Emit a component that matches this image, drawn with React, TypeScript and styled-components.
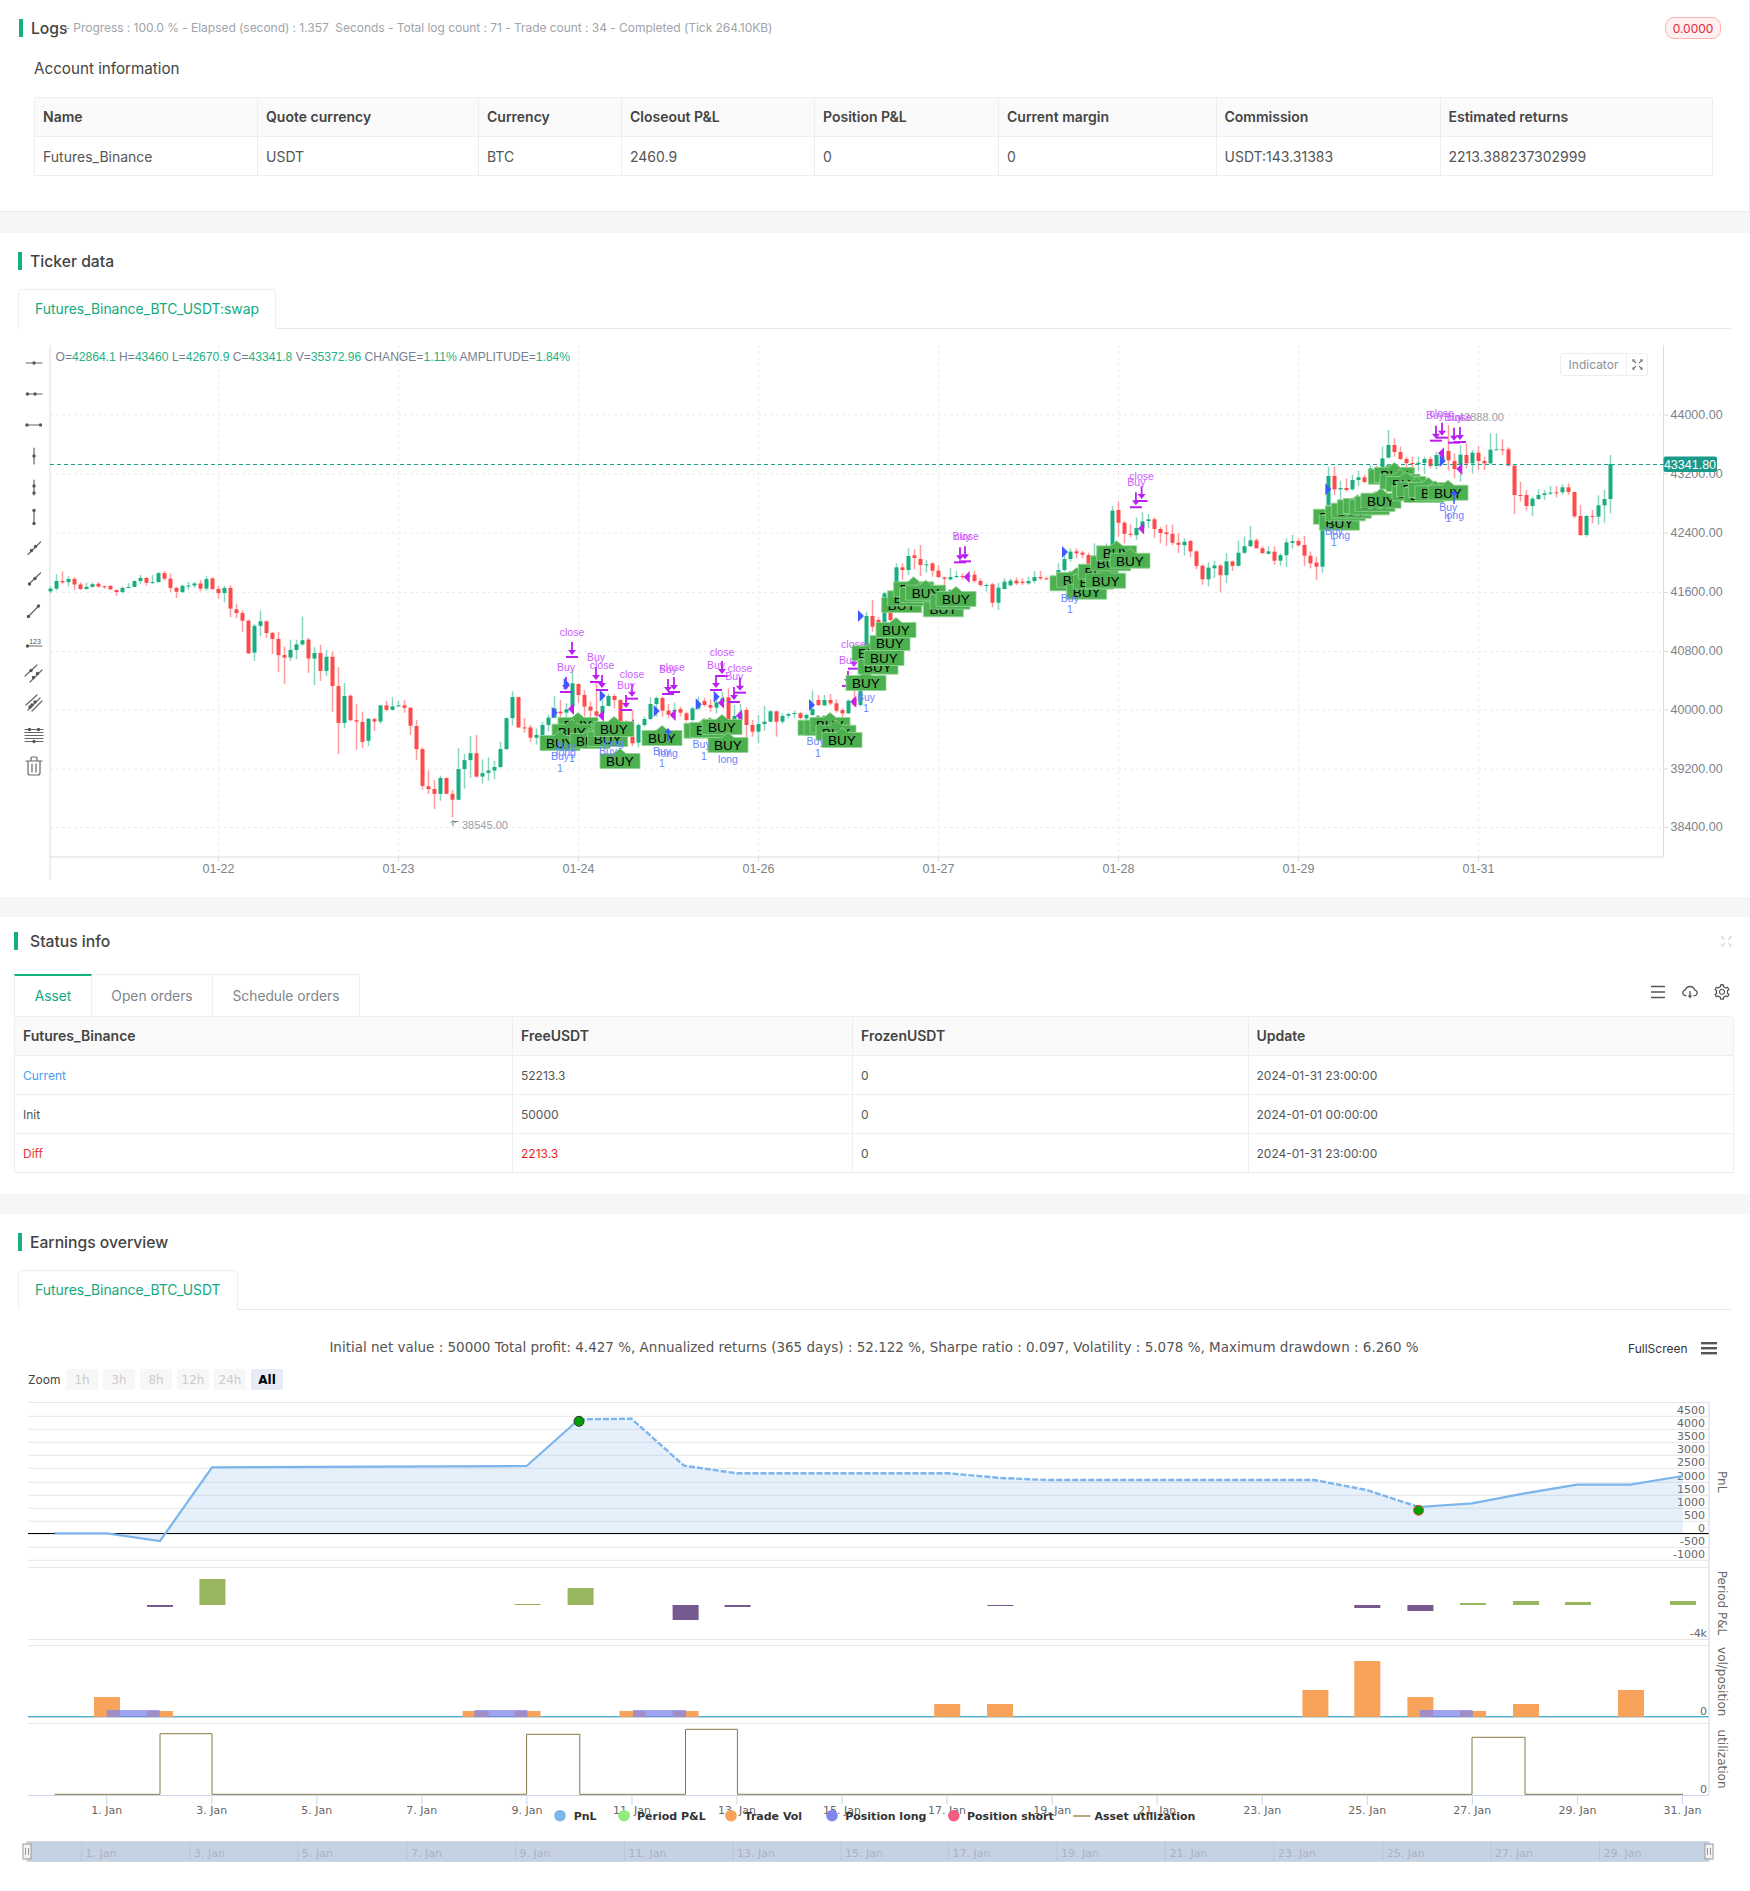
import React from 'react';
import styled, { createGlobalStyle } from 'styled-components';
import { AiOutlineCloudDownload, AiOutlineFullscreen, AiOutlineMenu, AiOutlineSetting } from 'react-icons/ai';

const Global = createGlobalStyle`
  html, body { margin: 0; padding: 0; background: #fff; overflow: hidden; }
  body { font-family: Inter, "Liberation Sans", sans-serif; color: #333; }
`;

const Page = styled.div`width: 1750px; height: 1891px; background: #fff;`;
const Section = styled.section<{ $h: number; $pt: number; $edge?: boolean }>`
  height: ${p => p.$h}px; padding-top: ${p => p.$pt}px; box-sizing: border-box; background: #fff;
  ${p => p.$edge ? 'border-bottom: 1px solid #eee; border-right: 1px solid #eee;' : ''}
`;
const Band = styled.div<{ $h: number }>`height: ${p => p.$h}px; background: #f5f6f8;`;
const Head = styled.div<{ $ml: number; $mr?: number }>`
  display: flex; align-items: center; height: 18px; margin: 0 ${p => p.$mr ?? 0}px 0 ${p => p.$ml}px;
`;
const HeadBar = styled.i`display: block; width: 4px; height: 18px; background: #14b07e; flex: none;`;
const HeadTitle = styled.h2<{ $gap: number }>`
  margin: 0 0 0 ${p => p.$gap}px; padding-top: 1px; font-size: 15.7px; font-weight: 500; color: #444; line-height: 18px;
`;
const Progress = styled.span`
  margin-left: -3px; font-size: 12px; letter-spacing: -0.04px; color: #a0a4aa; white-space: nowrap; position: relative; top: -1px;
`;
const Badge = styled.span`
  margin-left: auto; margin-right: 28px; width: 56px; height: 22px; box-sizing: border-box; border: 1px solid #ffb3b3;
  background: #fff1f0; border-radius: 9px; font-size: 12px; color: #e5283a; display: flex; align-items: center; justify-content: center;
`;
const SubTitle = styled.h3`margin: 20px 0 16px 34px; font-size: 15.2px; line-height: 24px; font-weight: 400; color: #444;`;
const Grid = styled.div<{ $ml: number; $mr: number }>`
  margin: 0 ${p => p.$mr}px 0 ${p => p.$ml}px; border: 1px solid #eee; border-bottom: 0; border-radius: 3px 3px 0 0;
`;
const Row = styled.div<{ $cols: string; $head?: boolean; $h: number }>`
  display: grid; grid-template-columns: ${p => p.$cols}; height: ${p => p.$h}px; box-sizing: border-box;
  border-bottom: 1px solid #eee; background: ${p => p.$head ? '#fafafa' : '#fff'};
`;
const Cell = styled.div<{ $head?: boolean; $size: number; $color?: string; $pad: number }>`
  display: flex; align-items: center; padding-left: ${p => p.$pad}px; border-left: 1px solid #eee;
  padding-bottom: ${p => p.$head ? 2 : 0}px;
  font-size: ${p => p.$size}px; font-weight: ${p => p.$head ? 600 : 400};
  color: ${p => p.$color ?? (p.$head ? '#444' : '#555')}; white-space: nowrap;
  &:first-child { border-left: 0; }
`;
const TabLine = styled.div<{ $ml: number; $mr: number }>`
  display: flex; margin: 19px ${p => p.$mr}px 0 ${p => p.$ml}px; height: 40px; box-sizing: border-box; border-bottom: 1px solid #e8e8e8;
`;
const CardTab = styled.div`
  padding: 0 16px; height: 40px; box-sizing: border-box; border: 1px solid #eee; border-bottom: 1px solid #fff; border-radius: 4px 4px 0 0;
  display: flex; align-items: center; font-size: 13.9px; color: #12a97e; white-space: nowrap; margin-left: -1px;
`;
const ChartBox = styled.div<{ $h: number; $mt: number }>`position: relative; height: ${p => p.$h}px; margin-top: ${p => p.$mt}px;`;
const ChartSvg = styled.svg`display: block; position: absolute; left: 0; top: 0;`;
const IndicatorBtn = styled.div`
  position: absolute; left: 1560px; top: 8px; width: 88px; height: 23px; box-sizing: border-box; border: 1px solid #eee; border-radius: 3px;
  background: #fff; display: flex; align-items: center; font-size: 12px; color: #8a8f96;
`;
const IndicatorText = styled.span`width: 65px; text-align: center; border-right: 1px solid #eee; line-height: 21px;`;
const IndicatorIcon = styled.span`flex: 1; display: flex; justify-content: center; color: #666;`;
const FadedIcon = styled.span`margin-left: auto; display: flex; color: #d6d6d6;`;
const StatusBody = styled.div`margin: 0 16px 0 14px;`;
const StatusTabs = styled.div`display: flex; height: 42px; margin-top: 24px;`;
const PlainTab = styled.div<{ $active?: boolean; $w: number }>`
  width: ${p => p.$w}px; box-sizing: border-box; display: flex; align-items: center; justify-content: center; font-size: 13.8px;
  color: ${p => p.$active ? '#12a97e' : '#7f858c'}; border: 1px solid #eee; border-left: ${p => p.$active ? '1px solid #eee' : '0'}; border-bottom: 0;
  border-top: ${p => p.$active ? '2px solid #14b07e' : '1px solid #eee'}; background: #fff;
`;
const ToolIcons = styled.div`margin-left: auto; display: flex; gap: 14px; padding: 9px 3px 0 0; color: #555; height: 20px; font-size: 18px;`;

const Up = '#19ad80', Down = '#ff4a4a';
const CandleBody = styled.rect<{ $up: boolean }>`fill: ${p => p.$up ? Up : Down};`;
const CandleWick = styled.rect<{ $up: boolean }>`fill: ${p => p.$up ? '#8bd5be' : '#ff9d9d'};`;
const GridLine = styled.line`stroke: #ececec; stroke-width: 1; stroke-dasharray: 3 3;`;
const AxisLine = styled.line`stroke: #dcdcdc; stroke-width: 1;`;
const AxisText = styled.text`font: 12.5px "Liberation Sans", sans-serif; fill: #7d838c;`;
const OhlcText = styled.text`font: 12.1px "Liberation Sans", sans-serif; fill: #76808f;`;
const MarkText = styled.text<{ $blue?: boolean }>`
  font: 10.5px "Liberation Sans", sans-serif; fill: ${p => p.$blue ? '#6a84ff' : '#cc5cff'}; text-anchor: middle;
`;
const BuyText = styled.text`font: 13.5px "Liberation Sans", sans-serif; fill: #000; text-anchor: middle;`;
const HighText = styled.text`font: 11px "Liberation Sans", sans-serif; fill: #9aa0a8;`;
const ToolStroke = styled.g`stroke: #666; stroke-width: 1.2; fill: none; stroke-linecap: round;`;
const HcText = styled.text<{ $size?: number; $color?: string; $weight?: number; $anchor?: string }>`
  font-family: "DejaVu Sans", sans-serif; font-size: ${p => p.$size ?? 11}px; fill: ${p => p.$color ?? '#666'};
  font-weight: ${p => p.$weight ?? 400}; text-anchor: ${p => p.$anchor ?? 'start'};
`;
const HcGrid = styled.line`stroke: #e6e6e6; stroke-width: 1;`;
const HcAxis = styled.line`stroke: #ccd6eb; stroke-width: 1;`;

type C = { x: number; up: boolean; t: number; b: number; h: number; l: number };
const parse = (base: number, scale: number, start: number, rows: string): C[] =>
  rows.trim().split('\n').map((r, k) => {
    const [d, t, b, h, l] = r.trim().split(' ');
    const f = (v: string) => base + Number(v) / scale;
    return { x: 50.5 + 6 * (start + k), up: d === 'g', t: f(t), b: f(b), h: f(h), l: f(l) };
  });

const candles: C[] = [
  ...parse(340, 2.904, 0, `g 722 730 715 735
g 700 722 680 728
r 700 704 672 708
g 694 703 686 716
r 694 710 688 726
r 710 723 704 726
g 717 723 705 725
g 709 717 704 719
r 708 716 703 719
r 715 717 713 722
r 714 724 712 726
r 726 732 724 743
g 720 732 716 736
g 717 718 706 720
g 700 717 698 718
g 691 700 682 708
r 691 705 688 713
g 703 705 682 708
g 677 703 674 705
r 677 693 671 698
r 693 720 678 732
r 720 731 716 749
g 714 732 710 735
g 713 715 703 725
g 707 713 702 720
r 707 722 697 730
g 694 722 685 728
r 692 723 690 726
r 723 735 714 752
g 720 735 714 762
r 720 780 712 805
r 782 793 767 808
r 793 815 785 848
r 815 910 812 912
g 830 908 825 932
g 817 830 786 860
r 817 851 815 865
r 851 868 848 912
r 868 915 848 964
r 915 922 890 999
g 900 922 870 932
g 884 900 870 927
g 872 884 803 888
r 870 925 865 967
g 909 925 892 1002
r 909 961 885 990
g 920 961 900 976
r 920 1005 905 1080
r 1005 1112 950 1202
g 1034 1112 996 1127
r 1033 1104 1030 1107
r 1104 1108 1057 1190
r 1109 1167 1080 1185
g 1100 1164 1098 1179
r 1101 1108 1098 1135
g 1061 1108 1060 1115
r 1061 1074 1048 1078
g 1064 1074 1037 1076
g 1061 1063 1048 1065
r 1061 1068 1046 1083
r 1068 1120 1066 1147
r 1121 1188 1103 1220
r 1188 1295 1183 1306
r 1296 1304 1250 1318
r 1304 1318 1278 1362
g 1272 1318 1265 1338
r 1272 1318 1270 1318
r 1318 1335 1306 1386
g 1246 1335 1185 1337
g 1220 1246 1202 1303
g 1200 1220 1150 1272
r 1200 1268 1147 1270
g 1258 1268 1218 1288
g 1250 1257 1212 1280
g 1240 1250 1222 1275
g 1188 1240 1167 1243
g 1098 1188 1096 1190
g 1037 1098 1020 1120
r 1037 1125 1036 1127
r 1125 1127 1098 1140
r 1125 1155 1118 1168
g 1147 1155 1128 1175`),
  ...parse(540, 3, 82, `g 555 585 545 605
g 533 555 525 575
g 505 533 468 535
r 515 520 480 540
g 508 518 490 540
g 430 500 390 510
r 432 465 430 490
r 465 500 450 530
r 500 512 485 545
r 514 527 430 550
g 498 520 470 540
g 468 498 462 500
r 468 480 462 505
r 480 545 478 600
r 545 555 540 570
r 590 610 510 618
g 555 608 550 622
g 537 555 530 560
g 492 537 472 540
g 474 492 470 530
r 474 512 470 530
r 512 524 492 534
g 510 514 488 520
r 507 518 500 530
r 520 540 515 545
g 505 540 500 545
g 490 505 470 510
r 483 495 473 500
r 495 503 478 515
g 487 503 470 520
g 475 487 455 495
r 472 540 445 560
g 528 540 495 545
g 518 540 492 545
r 510 555 502 595
r 555 575 540 590
g 552 575 525 610
g 545 552 498 572
g 514 545 510 546
r 514 545 512 590
g 528 545 520 552
g 522 527 518 535
g 519 522 512 535
r 520 534 516 538
g 525 535 520 540
g 507 525 452 528
r 480 495 465 498
g 480 496 465 498
r 480 490 462 495
r 490 512 478 518
r 510 520 505 535
g 482 520 478 522
r 475 495 430 500
g 415 495 395 500`),
  ...parse(530, 3, 136, `g 258 351 245 380
r 258 290 210 305
r 270 295 262 320
g 190 280 185 285
r 215 270 190 275
g 112 160 100 200
r 112 120 100 150
g 78 120 55 135
r 76 84 58 118
r 87 105 45 138
g 103 105 90 128
r 100 122 97 140
r 122 141 105 145
r 142 146 140 170
g 141 148 113 152
g 138 140 123 145
r 138 140 130 148
g 136 140 130 145
r 134 153 122 158
r 153 165 145 170
g 165 167 160 185
r 163 218 158 232
g 173 218 158 240
g 155 177 145 178
g 152 166 145 170
r 152 160 142 165
r 155 159 145 165
g 153 160 140 165
g 141 153 123 160
r 141 145 123 150
r 145 148 140 150
g 138 146 135 150
g 120 160 100 170
g 87 120 70 125
g 65 87 55 95
r 64 70 55 85
r 68 74 62 85
r 75 102 68 118
g 82 100 40 110`),
  ...parse(340, 2.9, 175, `g 610 630 600 640
g 600 612 590 620
g 495 600 482 600
r 493 530 468 570
r 530 562 525 590
r 562 565 535 572
g 545 566 515 580
g 526 545 500 560
g 520 525 505 545
r 520 548 515 575
r 548 560 542 590
r 558 563 535 598
r 562 588 535 595
r 588 594 560 618
g 585 595 575 625
r 583 613 580 630
r 613 655 610 665
r 655 694 650 710
g 660 694 645 715
g 654 662 640 690
r 654 682 650 732
g 642 682 618 705
r 642 655 640 670
g 617 655 582 657
g 598 617 570 620
g 581 598 540 600
r 581 604 575 605
r 604 618 598 620
g 613 620 598 622
r 614 640 598 652
g 624 640 618 655
g 587 624 575 658
g 583 588 565 605
r 583 595 575 600`),
  ...parse(400, 3, 209, `r 435 467 408 498
r 467 490 455 505
r 488 500 470 540
g 375 500 375 518
g 228 315 200 330
r 228 268 200 285
g 264 268 242 298
r 264 270 235 275
g 240 268 225 272
g 232 240 212 258
r 232 246 225 250
g 205 240 195 245
r 203 212 198 220
g 175 215 140 220
g 135 173 90 175
r 135 156 115 170
r 156 177 140 180
r 177 189 170 205
r 189 192 170 205
g 188 192 170 215
g 177 189 170 222
r 177 198 170 205
g 165 198 155 208
g 170 180 150 190
r 153 181 75 212
r 183 207 160 235
g 164 195 135 245
r 165 190 130 205
g 158 190 150 220
r 158 183 138 210
r 183 190 170 210
g 149 190 100 192
g 148 150 100 150
r 148 150 118 165
r 148 197 142 197
r 197 285 197 342
r 285 287 245 305
r 285 318 270 332
g 296 318 290 348
g 285 297 268 300
g 280 285 270 300
g 278 280 258 285
r 277 279 258 292
g 262 277 252 284
r 262 276 250 285
r 276 349 276 355
r 348 405 315 408
g 348 405 345 410
r 348 350 330 370
g 316 350 286 375
g 297 316 270 368
g 192 297 165 340`),
];

type P = [number, number];
const z4 = (x: number, y: number): P => [500 + x / 3, 540 + y / 3];
const z5 = (x: number, y: number): P => [1000 + x / 2.09, 340 + y / 2.9];
const z11 = (x: number, y: number): P => [1300 + x / 3, 400 + y / 3];
const z12 = (x: number, y: number): P => [840 + x / 3, 530 + y / 3];

const buys: P[] = [
  z4(234, 555), z4(216, 575), z4(180, 609), z4(270, 603), z4(323, 597), z4(342, 567), z4(360, 663), z4(486, 594),
  z4(612, 572), z4(630, 570), z4(666, 561), z4(684, 615),
  z4(954, 563), z4(972, 563), z4(990, 555), z4(1008, 578), z4(1026, 600),
  z4(1098, 429), z4(1116, 340), z4(1134, 380), z4(1152, 354), z4(1170, 309), z4(1188, 270),
  z12(185, 225), z12(203, 205), z12(221, 178), z12(239, 195), z12(257, 188), z12(310, 238), z12(330, 215), z12(348, 207),
  z12(690, 160), z12(710, 150), z12(740, 185), z12(760, 155), z12(775, 125), z12(797, 152), z12(812, 100), z12(830, 70), z12(870, 92),
  z11(100, 350), z11(118, 368), z11(136, 340), z11(154, 332), z11(172, 322), z11(190, 318), z11(208, 322), z11(225, 312), z11(243, 302),
  z11(265, 230), z11(283, 225), z11(300, 245), z11(318, 252), z11(336, 280), z11(350, 268), z11(372, 285), z11(385, 270), z11(405, 280), z11(444, 278),
];
const closes: { bar: P; label: P; text: string }[] = [
  { bar: z4(216, 351), label: z4(216, 276), text: 'close' }, { bar: z4(198, 456), label: z4(198, 381), text: 'Buy' },
  { bar: z4(288, 426), label: z4(288, 351), text: 'Buy' }, { bar: z4(306, 450), label: z4(306, 375), text: 'close' },
  { bar: z4(396, 476), label: z4(396, 402), text: 'close' }, { bar: z4(378, 510), label: z4(378, 435), text: 'Buy' },
  { bar: z4(504, 462), label: z4(504, 388), text: 'Buy' }, { bar: z4(522, 456), label: z4(518, 381), text: 'close' },
  { bar: z4(648, 450), label: z4(648, 375), text: 'Buy' }, { bar: z4(666, 408), label: z4(666, 336), text: 'close' },
  { bar: z4(702, 486), label: z4(703, 410), text: 'Buy' }, { bar: z4(720, 458), label: z4(720, 384), text: 'close' },
  { bar: z4(1062, 386), label: z4(1060, 312), text: 'close' }, { bar: z4(1044, 438), label: z4(1044, 362), text: 'Buy' },
  { bar: z12(375, 94), label: z12(380, 18), text: 'close' }, { bar: z12(360, 97), label: z12(365, 20), text: 'Buy' },
  { bar: z5(296, 467), label: z5(296, 395), text: 'close' }, { bar: z5(284, 485), label: z5(285, 412), text: 'Buy' },
  { bar: z11(408, 122), label: z11(405, 47), text: 'Buy' }, { bar: z11(426, 113), label: z11(425, 40), text: 'close' },
  { bar: z11(462, 128), label: z11(460, 52), text: 'Buy' }, { bar: z11(480, 126), label: z11(478, 52), text: 'close' },
];
const rightTri: P[] = [z4(164, 518), z4(200, 432), z4(308, 467), z4(470, 513), z4(596, 493), z4(650, 470), z4(936, 495), z4(1083, 228), z12(675, 66), z11(85, 268), z11(428, 183)];
const leftTri: P[] = [z4(213, 507), z4(303, 527), z4(393, 555), z4(518, 525), z4(663, 488), z4(717, 527), z4(1060, 485), z12(380, 141), z5(295, 547), z11(423, 160), z11(478, 207)];
const blues: { p: P; t: string }[] = [
  { p: z4(180, 650), t: 'Buy' }, { p: z4(180, 686), t: '1' }, { p: z4(198, 636), t: 'long' }, { p: z4(200, 620), t: 'Buy' }, { p: z4(216, 655), t: '1' },
  { p: z4(342, 610), t: 'long' }, { p: z4(324, 634), t: 'Buy' }, { p: z4(486, 635), t: 'Buy' }, { p: z4(504, 640), t: 'long' }, { p: z4(486, 670), t: '1' },
  { p: z4(605, 612), t: 'Buy' }, { p: z4(612, 650), t: '1' }, { p: z4(684, 657), t: 'long' }, { p: z4(947, 605), t: 'Buy' }, { p: z4(954, 640), t: '1' },
  { p: z4(1098, 471), t: 'Buy' }, { p: z4(1098, 506), t: '1' }, { p: z5(146, 750), t: 'Buy' }, { p: z5(146, 782), t: '1' },
  { p: z5(698, 555), t: 'Buy' }, { p: z5(711, 567), t: 'long' }, { p: z5(698, 588), t: '1' }, { p: z5(937, 485), t: 'Buy' }, { p: z5(949, 508), t: 'long' }, { p: z5(937, 518), t: '1' },
];
const priceLines: [number, string][] = [[415, '44000.00'], [474, '43200.00'], [533, '42400.00'], [592.5, '41600.00'], [651.5, '40800.00'], [710, '40000.00'], [769, '39200.00'], [827.5, '38400.00']];
const dateTicks: [number, string][] = [[218.5, '01-22'], [398.5, '01-23'], [578.5, '01-24'], [758.5, '01-26'], [938.5, '01-27'], [1118.5, '01-28'], [1298.5, '01-29'], [1478.5, '01-31']];

const Ohlc = () => {
  const parts: [string, string][] = [['O=', '42864.1'], [' H=', '43460'], [' L=', '42670.9'], [' C=', '43341.8'], [' V=', '35372.96'], [' CHANGE=', '1.11%'], [' AMPLITUDE=', '1.84%']];
  return (
    <OhlcText x={55.5} y={361} xmlSpace="preserve">
      {parts.map(([a, b], i) => <React.Fragment key={i}><tspan>{a}</tspan><tspan fill="#22b184">{b}</tspan></React.Fragment>)}
    </OhlcText>
  );
};

const Dot = ({ x, y }: { x: number; y: number }) => <circle cx={x} cy={y} r={1.7} fill="#555" stroke="none" />;
const Tools = () => {
  const ys = [363, 394, 425, 456, 487, 517, 548, 579, 611, 642, 673, 703, 735, 766];
  return (
    <ToolStroke>
      <g transform={`translate(34 ${ys[0]})`}><path d="M-8 0H8" /><Dot x={0} y={0} /></g>
      <g transform={`translate(34 ${ys[1]})`}><path d="M-8 0H8" /><Dot x={-6.5} y={0} /><Dot x={1} y={0} /></g>
      <g transform={`translate(34 ${ys[2]})`}><path d="M-8 0H7" /><Dot x={-7} y={0} /><Dot x={6.5} y={0} /></g>
      <g transform={`translate(34 ${ys[3]})`}><path d="M0 -8V8" /><Dot x={0} y={0} /></g>
      <g transform={`translate(34 ${ys[4]})`}><path d="M0 -7V8" /><Dot x={0} y={-1} /><Dot x={0} y={6} /></g>
      <g transform={`translate(34 ${ys[5]})`}><path d="M0 -6V7" /><Dot x={0} y={-6.5} /><Dot x={0} y={6.5} /></g>
      <g transform={`translate(34 ${ys[6]})`}><path d="M-6 6.5L6.5 -6" /><Dot x={-2.5} y={2.5} /><Dot x={1.5} y={-1.5} /></g>
      <g transform={`translate(34 ${ys[7]})`}><path d="M-5 5L6.5 -6" /><Dot x={-4.5} y={5} /><Dot x={1} y={-0.5} /></g>
      <g transform={`translate(34 ${ys[8]})`}><path d="M-5.5 5.5L4.5 -5" /><Dot x={-5.5} y={5.5} /><Dot x={4.5} y={-5} /></g>
      <g transform={`translate(34 ${ys[9]})`}><path d="M-6.5 4H8" /><Dot x={-6.5} y={4} /><text x={1} y={2} textAnchor="middle" fontSize={7} fill="#555" stroke="none" fontFamily="Liberation Sans">123</text></g>
      <g transform={`translate(34 ${ys[10]})`}><path d="M-9 3L3 -8M-4 9L8 -3" /><Dot x={-3} y={-2.5} /><Dot x={-0.5} y={4.5} /><Dot x={3.5} y={0.5} /></g>
      <g transform={`translate(34 ${ys[11]})`}><path d="M-8 2L3 -8M-6 7L6 -5M-2 8L8 -2" /><Dot x={-2} y={2} /><Dot x={1} y={-1} /><Dot x={-4} y={4} /></g>
      <g transform={`translate(34 ${ys[12]})`}><path d="M-9 -5.5H9M-9 -2.5H9M-9 0.5H9M-9 3.5H9M-9 6.5H9" /><Dot x={-4.5} y={-5.5} /><Dot x={4.5} y={-5.5} /><Dot x={0} y={6.5} /></g>
      <g transform={`translate(34 ${ys[13]})`}><path d="M-6 -5V7Q-6 9 -4 9H4Q6 9 6 7V-5M-8 -5H8M-3 -5V-8Q-3 -9 -2 -9H2Q3 -9 3 -8V-5M-2 -2V6M2 -2V6" /></g>
    </ToolStroke>
  );
};

const Mark = ({ bar, label, text }: { bar: P; label: P; text: string }) => (
  <g>
    <MarkText x={label[0]} y={label[1] + 3.5}>{text}</MarkText>
    <line x1={bar[0]} x2={bar[0]} y1={bar[1] - 15} y2={bar[1] - 4} stroke="#b81ff0" strokeWidth={1.8} />
    <path d={`M${bar[0] - 4} ${bar[1] - 7}H${bar[0] + 4}L${bar[0]} ${bar[1] - 2}Z`} fill="#b81ff0" />
    <rect x={bar[0] - 6} y={bar[1] - 1} width={12} height={2} fill="#b81ff0" />
  </g>
);
const BuyLabel = ({ p }: { p: P }) => {
  const [x, y] = p;
  return (
    <g>
      <path d={`M${x - 20} ${y - 7.5}H${x - 6}L${x} ${y - 12.5}L${x + 6} ${y - 7.5}H${x + 20}V${y + 7.5}H${x - 20}Z`} fill="#4caf50" stroke="#93d495" strokeWidth={0.8} />
      <BuyText x={x} y={y + 5}>BUY</BuyText>
    </g>
  );
};
const UpArrow = ({ x, top, bot }: { x: number; top: number; bot: number }) => (
  <g>
    <line x1={x} x2={x} y1={top + 3} y2={bot} stroke="#3d5afe" strokeWidth={1.5} />
    <path d={`M${x - 4} ${top + 5}H${x + 4}L${x} ${top}Z`} fill="#3d5afe" />
  </g>
);

const TickerChart = () => (
  <ChartSvg width={1750} height={552} viewBox="0 345 1750 552">
    {priceLines.map(([y]) => <GridLine key={y} x1={50} x2={1664} y1={y} y2={y} />)}
    {dateTicks.map(([x]) => <GridLine key={x} x1={x} x2={x} y1={345} y2={857} />)}
    <AxisLine x1={50} x2={50} y1={345} y2={880} />
    <AxisLine x1={1663.5} x2={1663.5} y1={345} y2={857} />
    <AxisLine x1={50} x2={1664} y1={857} y2={857} />
    {dateTicks.map(([x, t]) => (
      <g key={t}>
        <AxisLine x1={x} x2={x} y1={857} y2={861} />
        <AxisText x={x} y={873} textAnchor="middle">{t}</AxisText>
      </g>
    ))}
    {priceLines.map(([y, t]) => (
      <g key={t}>
        <AxisLine x1={1664} x2={1668} y1={y} y2={y} />
        <AxisText x={1670.5} y={y + 3.5}>{t}</AxisText>
      </g>
    ))}
    {candles.map((c, i) => (
      <g key={i}>
        <CandleWick $up={c.up} x={c.x - 0.75} y={c.h} width={1.5} height={Math.max(c.l - c.h, 1)} />
        <CandleBody $up={c.up} x={c.x - 2} y={c.t} width={4} height={Math.max(c.b - c.t, 1)} />
      </g>
    ))}
    <line x1={50} x2={1664} y1={464.5} y2={464.5} stroke="#12a58b" strokeWidth={1.2} strokeDasharray="4 3" />
    <rect x={1663.5} y={456.5} width={53.5} height={15.5} rx={2} fill="#1a9a8a" />
    <text x={1690} y={468.5} textAnchor="middle" fontSize={12.5} fill="#fff" fontFamily="Liberation Sans">43341.80</text>
    <Ohlc />
    <Tools />
    <path d="M453 826V821M450.5 823L453 820.5L455.5 823M453 821.5H458" stroke="#7b8088" fill="none" strokeWidth={1} />
    <HighText x={462} y={828.5}>38545.00</HighText>
    <HighText x={1458} y={421}>43888.00</HighText>
    {closes.map((m, i) => <Mark key={i} {...m} />)}
    {rightTri.map(([x, y], i) => <path key={i} d={`M${x - 3} ${y - 6}L${x + 3} ${y}L${x - 3} ${y + 6}Z`} fill="#3d5afe" />)}
    {leftTri.map(([x, y], i) => <path key={i} d={`M${x + 3} ${y - 6}L${x - 3} ${y}L${x + 3} ${y + 6}Z`} fill="#c020f0" />)}
    {buys.map((p, i) => <BuyLabel key={i} p={p} />)}
    {blues.map((b, i) => <MarkText key={i} $blue x={b.p[0]} y={b.p[1] + 3.5}>{b.t}</MarkText>)}
    <UpArrow x={668} top={728} bot={741} />
    <UpArrow x={1454} top={490} bot={504} />
  </ChartSvg>
);

const pnlTicks: [number, string][] = [[1416.3, '4500'], [1429.3, '4000'], [1442.3, '3500'], [1455.3, '3000'], [1468.3, '2500'], [1482.3, '2000'], [1495.3, '1500'], [1508.3, '1000'], [1521.3, '500'], [1534.3, '0'], [1547.3, '-500'], [1560.3, '-1000']];
const solidA = '54.7,1533.3 107,1533.3 160,1541 212,1467.3 526.6,1466 579,1419.3';
const dashed = '579,1419.3 631.5,1418.7 684,1465.7 737,1473.3 948.7,1473.3 1000.7,1478 1048,1480 1314,1480 1366.6,1490 1418.6,1507';
const solidB = '1418.6,1507 1472,1503.3 1524.7,1493.3 1577,1484.7 1630.3,1484.7 1682.8,1476';
const areaPts = `54.7,1534 ${solidA} ${dashed} ${solidB} 1682.8,1534`;
const pnlBars: [number, number, boolean][] = [
  [147, 681, false], [199.4, 597, true], [514.5, 672, true], [567.6, 624, true], [672.6, 720, false], [724.6, 681, false],
  [987.3, 678, false], [1354.3, 684, false], [1407.4, 693, false], [1460, 669, true], [1513, 663, true], [1565, 666, true], [1670, 663, true],
];
const volBars: [number, number][] = [
  [94, 951], [147, 993], [462.6, 993], [514.5, 993], [619.5, 993], [672.6, 993], [934.2, 972], [987, 972], [1302.4, 930], [1354.3, 843], [1407.4, 951], [1460, 993], [1513, 972], [1618, 930],
];
const longBars = [106.7, 474.3, 633, 1419.7];
const dayLabels = [1, 3, 5, 7, 9, 11, 13, 15, 17, 19, 21, 23, 25, 27, 29, 31];
const zy = (v: number) => 1380 + v / 3;
const utilPath = `M54.7 1794.3H160V1733.7H212V1794.3H526.6V1734.3H579.8V1794.3H685.5V1729.3H737.4V1794.3H1472V1737.3H1525V1794.3H1683`;
const rangeBtns: [number, string][] = [[66, '1h'], [103, '3h'], [140, '8h'], [177, '12h'], [214, '24h']];
const navX = [85.5, 194, 302, 411, 519.5, 628.5, 737, 845, 952.6, 1061, 1169.4, 1278, 1386.7, 1495, 1603.5];
const legend: [number, string, string, number][] = [[560, 'PnL', '#7cb5ec', 573.7], [624, 'Period P&L', '#90ed7d', 637], [731, 'Trade Vol', '#f7a35c', 744.6], [832, 'Position long', '#8085e9', 845.2], [953.8, 'Position short', '#f15c80', 967]];

const EarningsChart = () => (
  <ChartSvg width={1750} height={571} viewBox="0 1320 1750 571">
    <HcText x={874} y={1352} $size={13.5} $color="#555" $anchor="middle">Initial net value : 50000 Total profit: 4.427 %, Annualized returns (365 days) : 52.122 %, Sharpe ratio : 0.097, Volatility : 5.078 %, Maximum drawdown : 6.260 %</HcText>
    <text x={1628} y={1353} fontSize={12} fill="#333" fontFamily="Inter">FullScreen</text>
    <rect x={1701} y={1342} width={16} height={2.4} fill="#555" /><rect x={1701} y={1347} width={16} height={2.4} fill="#555" /><rect x={1701} y={1352} width={16} height={2.4} fill="#555" />
    <text x={28} y={1384} fontSize={12} fill="#444" fontFamily="Inter">Zoom</text>
    {rangeBtns.map(([x, t]) => (
      <g key={t}>
        <rect x={x} y={1369} width={32} height={21} rx={2} fill="#f7f7f7" />
        <HcText x={x + 16} y={1384} $size={12} $color="#ccc" $anchor="middle">{t}</HcText>
      </g>
    ))}
    <rect x={251} y={1369} width={32} height={21} rx={2} fill="#e6ebf5" />
    <HcText x={267} y={1384} $size={12} $color="#000" $weight={700} $anchor="middle">All</HcText>

    <HcGrid x1={28} x2={1709} y1={1402.5} y2={1402.5} />
    {pnlTicks.map(([y, t]) => (
      <g key={t}>
        <HcGrid x1={28} x2={1709} y1={y} y2={y} />
        <HcText x={1705} y={y - 2.5} $anchor="end">{t}</HcText>
      </g>
    ))}
    <polygon points={areaPts} fill="rgba(124,181,236,0.2)" />
    <line x1={28} x2={1709} y1={1533.5} y2={1533.5} stroke="#000" strokeWidth={1} />
    <polyline points={solidA} fill="none" stroke="#7cb5ec" strokeWidth={2.2} />
    <polyline points={dashed} fill="none" stroke="#7cb5ec" strokeWidth={2.4} strokeDasharray="6 2" />
    <polyline points={solidB} fill="none" stroke="#7cb5ec" strokeWidth={2.2} />
    <circle cx={579} cy={1421.3} r={5} fill="#00a000" stroke="#333" strokeWidth={1} />
    <circle cx={1418.6} cy={1510.3} r={5} fill="#00a000" stroke="#f04a3a" strokeWidth={1} />

    <HcGrid x1={28} x2={1709} y1={1567.5} y2={1567.5} /><HcGrid x1={28} x2={1709} y1={1639.5} y2={1639.5} />
    {pnlBars.map(([x, v, up], i) => {
      const a = zy(675), b = zy(v);
      return <rect key={i} x={x} y={up ? b : a} width={26} height={Math.abs(b - a)} fill={up ? '#98b65f' : '#745a8e'} />;
    })}
    <HcText x={1707} y={1637} $anchor="end">-4k</HcText>

    <HcGrid x1={28} x2={1709} y1={1645.5} y2={1645.5} /><HcGrid x1={28} x2={1709} y1={1717.5} y2={1717.5} />
    <line x1={28} x2={1709} y1={1716.7} y2={1716.7} stroke="#1c9fc7" strokeWidth={1} />
    {volBars.map(([x, v], i) => <rect key={i} x={x} y={zy(v)} width={26} height={1717 - zy(v)} fill="#f7a35c" />)}
    {longBars.map(x => <rect key={x} x={x} y={1710} width={53} height={7} fill="rgba(128,133,233,0.75)" />)}
    <HcText x={1707} y={1715} $anchor="end">0</HcText>

    <HcGrid x1={28} x2={1709} y1={1723.5} y2={1723.5} />
    <path d={utilPath} fill="none" stroke="#857a47" strokeWidth={1} />
    <HcAxis x1={28} x2={1709} y1={1795.5} y2={1795.5} />
    <HcText x={1707} y={1793} $anchor="end">0</HcText>
    <HcAxis x1={1709} x2={1709} y1={1402} y2={1795} />

    {dayLabels.map((d, i) => {
      const x = 106.7 + i * 105.05;
      return (
        <g key={d}>
          <HcAxis x1={x} x2={x} y1={1795.5} y2={1805} />
          <HcText x={x} y={1814} $anchor="middle">{d}. Jan</HcText>
        </g>
      );
    })}
    {legend.map(([x, t, c, tx]) => (
      <g key={t}>
        <circle cx={x} cy={1815.7} r={5.8} fill={c} />
        <HcText x={tx} y={1820} $size={11} $color="#333" $weight={700}>{t}</HcText>
      </g>
    ))}
    <rect x={1073.4} y={1815} width={17} height={2} fill="#b5a878" />
    <HcText x={1094.5} y={1820} $size={11} $color="#333" $weight={700}>Asset utilization</HcText>

    <HcText x={0} y={0} $size={12} $anchor="middle" transform="translate(1718 1481.7) rotate(90)">PnL</HcText>
    <HcText x={0} y={0} $size={12} $anchor="middle" transform="translate(1718 1603) rotate(90)">Period P&amp;L</HcText>
    <HcText x={0} y={0} $size={12} $anchor="middle" transform="translate(1718 1681.7) rotate(90)">vol/position</HcText>
    <HcText x={0} y={0} $size={12} $anchor="middle" transform="translate(1718 1759) rotate(90)">utilization</HcText>

    <rect x={27} y={1841.5} width={1682} height={20} fill="#c5d2e3" stroke="#cfd6e0" strokeWidth={1} />
    {navX.map((x, i) => (
      <g key={x}>
        <line x1={x - 4} x2={x - 4} y1={1842} y2={1861} stroke="#b9c6d8" strokeWidth={1} />
        <HcText x={x} y={1857} $color="#a7b3c4">{dayLabels[i]}. Jan</HcText>
      </g>
    ))}
    {[27, 1709].map(x => (
      <g key={x}>
        <rect x={x - 4} y={1844} width={8} height={15} fill="#f2f2f2" stroke="#999" strokeWidth={1} />
        <path d={`M${x - 1.5} 1848V1855M${x + 1.5} 1848V1855`} stroke="#999" strokeWidth={1} />
      </g>
    ))}
  </ChartSvg>
);

const acctCols = '222px 221px 143px 193px 184px 217.5px 224px 1fr';
const statCols = '497px 340px 395.5px 1fr';
const acctHead = ['Name', 'Quote currency', 'Currency', 'Closeout P&L', 'Position P&L', 'Current margin', 'Commission', 'Estimated returns'];
const acctVals = ['Futures_Binance', 'USDT', 'BTC', '2460.9', '0', '0', 'USDT:143.31383', '2213.388237302999'];
const statRows: { c: string[]; color?: string; color2?: string }[] = [
  { c: ['Current', '52213.3', '0', '2024-01-31 23:00:00'], color: '#4a9df0' },
  { c: ['Init', '50000', '0', '2024-01-01 00:00:00'] },
  { c: ['Diff', '2213.3', '0', '2024-01-31 23:00:00'], color: '#e23a3a', color2: '#ef1c1c' },
];

export default function App() {
  return (
    <Page>
      <Global />
      <Section $h={212} $pt={19} $edge>
        <Head $ml={19}>
          <HeadBar />
          <HeadTitle $gap={8}>Logs</HeadTitle>
          <Progress>- Progress : 100.0 % - Elapsed (second) : 1.357 &nbsp;Seconds - Total log count : 71 - Trade count : 34 - Completed (Tick 264.10KB)</Progress>
          <Badge>0.0000</Badge>
        </Head>
        <SubTitle>Account information</SubTitle>
        <Grid $ml={34} $mr={36}>
          <Row $cols={acctCols} $head $h={39}>{acctHead.map(t => <Cell key={t} $head $size={14} $pad={8}>{t}</Cell>)}</Row>
          <Row $cols={acctCols} $h={39}>{acctVals.map((t, i) => <Cell key={i} $size={14} $pad={8}>{t}</Cell>)}</Row>
        </Grid>
      </Section>
      <Band $h={21} />
      <Section $h={664} $pt={19}>
        <Head $ml={18}><HeadBar /><HeadTitle $gap={8}>Ticker data</HeadTitle></Head>
        <TabLine $ml={19} $mr={19}><CardTab>Futures_Binance_BTC_USDT:swap</CardTab></TabLine>
        <ChartBox $h={552} $mt={16}>
          <TickerChart />
          <IndicatorBtn><IndicatorText>Indicator</IndicatorText><IndicatorIcon><AiOutlineFullscreen size={15} /></IndicatorIcon></IndicatorBtn>
        </ChartBox>
      </Section>
      <Band $h={20} />
      <Section $h={277} $pt={15}>
        <Head $ml={14} $mr={16}><HeadBar /><HeadTitle $gap={12}>Status info</HeadTitle><FadedIcon><AiOutlineFullscreen size={15} /></FadedIcon></Head>
        <StatusBody>
          <StatusTabs>
            <PlainTab $active $w={78}>Asset</PlainTab>
            <PlainTab $w={121}>Open orders</PlainTab>
            <PlainTab $w={147}>Schedule orders</PlainTab>
            <ToolIcons><AiOutlineMenu /><AiOutlineCloudDownload /><AiOutlineSetting /></ToolIcons>
          </StatusTabs>
          <Grid $ml={0} $mr={0}>
            <Row $cols={statCols} $head $h={39}>{['Futures_Binance', 'FreeUSDT', 'FrozenUSDT', 'Update'].map(t => <Cell key={t} $head $size={14} $pad={8}>{t}</Cell>)}</Row>
            {statRows.map(r => (
              <Row key={r.c[0]} $cols={statCols} $h={39}>
                {r.c.map((t, i) => <Cell key={i} $size={12} $pad={8} $color={i === 0 ? r.color : i === 1 ? r.color2 : undefined}>{t}</Cell>)}
              </Row>
            ))}
          </Grid>
        </StatusBody>
      </Section>
      <Band $h={20} />
      <Section $h={677} $pt={19}>
        <Head $ml={18}><HeadBar /><HeadTitle $gap={8}>Earnings overview</HeadTitle></Head>
        <TabLine $ml={19} $mr={19}><CardTab>Futures_Binance_BTC_USDT</CardTab></TabLine>
        <ChartBox $h={571} $mt={10}><EarningsChart /></ChartBox>
      </Section>
    </Page>
  );
}
